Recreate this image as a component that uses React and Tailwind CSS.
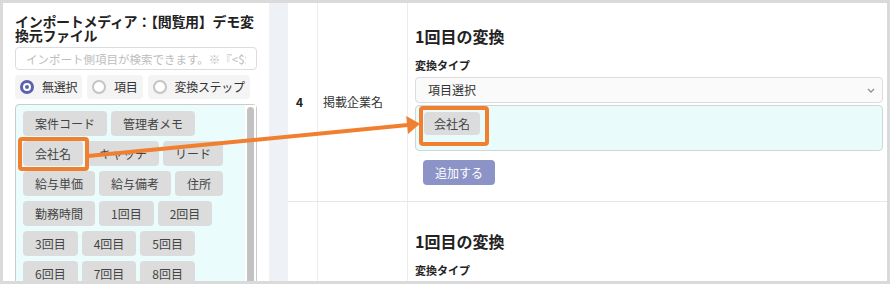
const font = { fontFamily: '"Noto Sans CJK JP", "Noto Sans", sans-serif' };

const chips = [
  "案件コード",
  "管理者メモ",
  "会社名",
  "キャッチ",
  "リード",
  "給与単価",
  "給与備考",
  "住所",
  "勤務時間",
  "1回目",
  "2回目",
  "3回目",
  "4回目",
  "5回目",
  "6回目",
  "7回目",
  "8回目",
];

function Radio({ label, checked }) {
  return (
    <label className="flex h-[24px] shrink-0 items-center gap-[8px] whitespace-nowrap rounded bg-[#f4f4f4] pl-[5px] pr-[5px] text-[12px] tracking-[-0.3px] text-[#333]">
      <span
        className={
          checked
            ? "flex h-[14px] w-[14px] shrink-0 items-center justify-center rounded-full border-[3px] border-[#5a61ad] bg-white"
            : "h-[14px] w-[14px] shrink-0 rounded-full border-2 border-[#c4c4c4] bg-white"
        }
      >
        {checked && <span className="h-[4px] w-[4px] rounded-full bg-[#5a61ad]" />}
      </span>
      {label}
    </label>
  );
}

function Chip({ children }) {
  return (
    <span className="flex h-[25px] items-center whitespace-nowrap rounded bg-[#dcdcdc] px-3 text-[12px] text-[#444]">
      {children}
    </span>
  );
}

function ConvertBlock({ top, showRest }) {
  return (
    <div className={`pl-[7px] pr-[4px] ${top}`}>
      <h2 className="h-[24px] text-[16px] font-bold leading-[24px] text-[#222]">1回目の変換</h2>
      <p className="mt-[9px] h-[16px] text-[11px] font-bold leading-[16px] text-[#222]">変換タイプ</p>
      {showRest && (
        <>
          <div className="mt-[4px] flex h-[26px] items-center justify-between rounded border border-[#dcdcdc] bg-[#fafafa] pl-[12px] pr-[6px] text-[12px] text-[#333]">
            <span>項目選択</span>
            <svg width="10" height="10" viewBox="0 0 10 10">
              <polyline points="2,4 5,7 8,4" fill="none" stroke="#8a919c" strokeWidth="1.3" />
            </svg>
          </div>
          <div className="mt-[2px] flex h-[46px] items-start rounded border border-[#cfd6d6] bg-[#eafbfb] pl-[8px] pt-[6px]">
            <span className="flex h-[23px] items-center rounded bg-[#dcdcdc] px-[10px] text-[12px] text-[#444]">
              会社名
            </span>
          </div>
          <button className="ml-[8px] mt-[9px] h-[25px] w-[72px] rounded bg-[#8c93c6] text-[12px] text-white">
            追加する
          </button>
        </>
      )}
    </div>
  );
}

export default function App() {
  return (
    <div
      className="relative flex h-[284px] w-[890px] overflow-hidden border-[3px] border-[#dadada] bg-white"
      style={font}
    >
      {/* left panel */}
      <div className="flex w-[266px] shrink-0 flex-col px-[12px] pt-[11px]">
        <h1 className="text-[14px] font-bold leading-[14px] tracking-[-0.3px] text-[#222]">
          インポートメディア：【閲覧用】デモ変換元ファイル
        </h1>
        <input
          className="mt-[5px] h-[23px] w-full shrink-0 rounded border border-[#dcdcdc] bg-white px-[10px] text-[11.5px] outline-none placeholder:text-[#bdbdbd]"
          placeholder="インポート側項目が検索できます。※『<$$>』で囲んだ文字は変数です"
        />
        <div className="mt-[5px] flex shrink-0 gap-[5px]">
          <Radio label="無選択" checked />
          <Radio label="項目" />
          <Radio label="変換ステップ" />
        </div>
        <div className="mt-[5px] flex h-[200px] shrink-0 rounded border border-[#cccccc] bg-[#ebfcfc]">
          <div className="flex flex-1 flex-wrap content-start gap-x-[4px] gap-y-[5px] pl-[7px] pt-[6px]">
            {chips.map((c) => (
              <Chip key={c}>{c}</Chip>
            ))}
          </div>
          <div className="w-[11px] shrink-0 bg-white px-[2px] pt-[2px]">
            <div className="h-full w-[7px] rounded-full bg-[#c2c2c2]" />
          </div>
        </div>
      </div>

      {/* strip */}
      <div className="w-[19px] shrink-0 bg-[#eef2f7]" />

      {/* table */}
      <div className="flex flex-1 flex-col">
        <div className="flex h-[199px] border-b border-[#e6e6e6]">
          <div className="flex w-[30px] items-center border-r border-[#ececec] pl-[8px] text-[12px] font-bold text-[#222]">
            4
          </div>
          <div className="flex w-[90px] items-center border-r border-[#ececec] pl-[5px] text-[12px] text-[#333]">
            掲載企業名
          </div>
          <div className="flex-1">
            <ConvertBlock top="pt-[21px]" showRest />
          </div>
        </div>
        <div className="flex flex-1">
          <div className="w-[30px] border-r border-[#ececec]" />
          <div className="w-[90px] border-r border-[#ececec]" />
          <div className="flex-1">
            <ConvertBlock top="pt-[27px]" />
          </div>
        </div>
      </div>

      {/* annotation overlay */}
      <svg className="pointer-events-none absolute left-[-3px] top-[-3px]" width="890" height="284">
        <rect x="20" y="139" width="67" height="30" rx="2" fill="none" stroke="#f07f2f" strokeWidth="4" />
        <rect x="421" y="108" width="66" height="36" rx="2" fill="none" stroke="#f07f2f" strokeWidth="4" />
        <line x1="88" y1="156" x2="408" y2="125" stroke="#f07f2f" strokeWidth="4" />
        <polygon points="420,123.8 408,134 406.2,116.1" fill="#f07f2f" />
      </svg>
    </div>
  );
}
